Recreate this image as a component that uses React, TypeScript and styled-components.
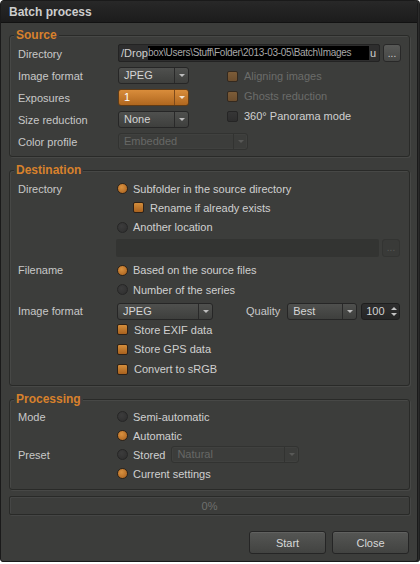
import React from 'react';
import styled, { createGlobalStyle, css } from 'styled-components';

const GlobalStyle = createGlobalStyle`
  html, body {
    margin: 0;
    padding: 0;
    background: #ffffff;
  }
  body {
    font-family: "Liberation Sans", Arial, sans-serif;
    font-size: 11px;
  }
`;

const Window = styled.div`
  width: 418px;
  height: 562px;
  box-sizing: border-box;
  background: #3c3d3b;
  border: 1px solid #1a1a1a;
  border-radius: 4px 4px 3px 3px;
  box-shadow: 1px 0 0 #2b2b2b, 2px 0 0 #202020;
  display: flex;
  flex-direction: column;
  overflow: hidden;
`;

const TitleBar = styled.div`
  height: 21px;
  flex: 0 0 21px;
  display: flex;
  align-items: center;
  padding-left: 8px;
  background: linear-gradient(#282828, #1c1c1c);
  border-bottom: 1px solid #121212;
`;

const Title = styled.span`
  font-weight: bold;
  font-size: 12px;
  color: #cdcdcd;
`;

const Body = styled.div`
  display: flex;
  flex-direction: column;
  padding: 0 7px 7px 8px;
`;

const Group = styled.fieldset<{ $top: number; $bottom: number }>`
  margin: ${({ $top }) => $top}px 0 0;
  padding: 0 8px ${({ $bottom }) => $bottom}px 8px;
  min-inline-size: 0;
  border: 1px solid #292a28;
  border-radius: 3px;
  box-shadow: inset 1px 1px 0 rgba(255, 255, 255, 0.06),
    1px 1px 0 rgba(255, 255, 255, 0.06);
`;

const Legend = styled.legend`
  font-weight: bold;
  font-size: 12px;
  line-height: 14px;
  color: #d8812c;
  padding: 0 2px;
  margin-left: -4px;
  background: #3c3d3b;
`;

const SourceGrid = styled.div`
  display: grid;
  grid-template-columns: 100px 109px 1fr;
  grid-auto-rows: 17px;
  row-gap: 5px;
  align-items: center;
  padding-top: 3px;
`;

const Label = styled.span`
  color: #c8c8c8;
  white-space: nowrap;
`;

const Wide = styled.div`
  grid-column: 2 / 4;
  display: flex;
  gap: 3px;
  height: 100%;
`;

const TextField = styled.div`
  flex: 0 0 262px;
  box-sizing: border-box;
  height: 18px;
  margin-top: -1px;
  background: #2e2e2e;
  border: 1px solid #232323;
  border-radius: 2px;
  overflow: hidden;
  display: flex;
  align-items: center;
  padding: 0 3px 0 2px;
  color: #d0d0d0;
  white-space: nowrap;
`;

const Masked = styled.span`
  flex: 1;
  min-width: 0;
  background: #000;
  color: #a8a8a8;
  font-size: 10px;
  letter-spacing: -0.3px;
  line-height: 14px;
  white-space: nowrap;
  margin-right: 1px;
`;

const DotsButton = styled.div<{ $disabled?: boolean }>`
  width: 18px;
  box-sizing: border-box;
  height: 18px;
  margin-top: -1px;
  border-radius: 3px;
  display: flex;
  align-items: center;
  justify-content: center;
  font-size: 10px;
  ${({ $disabled }) =>
    $disabled
      ? css`
          background: #393a38;
          border: 1px solid #333432;
          color: #5a5a58;
        `
      : css`
          background: linear-gradient(#585957, #464745);
          border: 1px solid #282828;
          color: #d0d0d0;
        `}
`;

const CheckList = styled.div`
  grid-column: 3;
  grid-row: 2 / 5;
  align-self: start;
  display: flex;
  flex-direction: column;
  gap: 2px;
`;

const CheckRow = styled.div<{ $disabled?: boolean; $indent?: number }>`
  display: flex;
  align-items: center;
  gap: 6px;
  height: 18px;
  margin-left: ${({ $indent }) => $indent || 0}px;
  color: ${({ $disabled }) => ($disabled ? '#6b6c6a' : '#d0d0d0')};
  white-space: nowrap;
`;

type BoxState = 'on' | 'off' | 'dim';

const Box = styled.span<{ $state: BoxState }>`
  width: 11px;
  height: 11px;
  box-sizing: border-box;
  border-radius: 2px;
  flex: 0 0 11px;
  ${({ $state }) =>
    $state === 'on'
      ? css`
          background: linear-gradient(#d38d3b, #a9621f);
          border: 1px solid #2c2118;
        `
      : $state === 'dim'
      ? css`
          background: linear-gradient(#7c5c38, #6c4e2e);
          border: 1px solid #33291f;
        `
      : css`
          background: linear-gradient(#363636, #2e2e2e);
          border: 1px solid #252525;
        `}
`;

type ComboKind = 'normal' | 'orange' | 'disabled';

const Combo = styled.div<{ $w: number; $kind?: ComboKind; $left?: number }>`
  display: flex;
  width: ${({ $w }) => $w}px;
  height: 17px;
  box-sizing: border-box;
  border-radius: 3px;
  margin-left: ${({ $left }) => $left || 0}px;
  flex: 0 0 auto;
  ${({ $kind }) =>
    $kind === 'orange'
      ? css`
          background: linear-gradient(#d98d3b, #b0671f);
          border: 1px solid #5f3b16;
          color: #ffffff;
        `
      : $kind === 'disabled'
      ? css`
          background: transparent;
          border: 1px solid #323331;
          box-shadow: inset 0 0 0 1px rgba(255, 255, 255, 0.025);
          color: #676866;
        `
      : css`
          background: linear-gradient(#4f504e, #3e3f3d);
          border: 1px solid #262626;
          color: #d6d6d6;
        `}
`;

const ComboText = styled.span`
  flex: 1;
  padding-left: 5px;
  line-height: 15px;
  white-space: nowrap;
`;

const ComboArrow = styled.span<{ $kind?: ComboKind }>`
  width: 13px;
  display: flex;
  align-items: center;
  justify-content: center;
  border-left: 1px solid
    ${({ $kind }) =>
      $kind === 'orange' ? '#7d4a1b' : $kind === 'disabled' ? '#323331' : '#292929'};
  &::after {
    content: '';
    border-left: 3px solid transparent;
    border-right: 3px solid transparent;
    border-top: 3px solid
      ${({ $kind }) =>
        $kind === 'orange' ? '#f2e2d0' : $kind === 'disabled' ? '#585957' : '#bdbdbd'};
  }
`;

const Row = styled.div<{ $h: number; $top?: number }>`
  display: grid;
  grid-template-columns: 99px 1fr;
  align-items: center;
  height: ${({ $h }) => $h}px;
  margin-top: ${({ $top }) => $top || 0}px;
`;

const Cell = styled.div`
  grid-column: 2;
  display: flex;
  align-items: center;
  gap: 3px;
`;

const RadioItem = styled.div`
  display: flex;
  align-items: center;
  gap: 5px;
  color: #d0d0d0;
  white-space: nowrap;
`;

const Radio = styled.span<{ $on?: boolean }>`
  width: 11px;
  height: 11px;
  box-sizing: border-box;
  border-radius: 50%;
  flex: 0 0 11px;
  ${({ $on }) =>
    $on
      ? css`
          background: radial-gradient(circle at 40% 35%, #d9913f, #a65f1d);
          border: 1px solid #2e2318;
        `
      : css`
          background: radial-gradient(circle at 40% 35%, #3c3c3c, #2e2e2e);
          border: 1px solid #262626;
        `}
`;

const DeadField = styled.div`
  width: 263px;
  height: 18px;
  margin-left: -1px;
  background: #333432;
  border-radius: 2px;
`;

const QualityLabel = styled(Label)`
  margin-left: 30px;
`;

const Spin = styled.div`
  display: flex;
  align-items: center;
  width: 39px;
  height: 17px;
  box-sizing: border-box;
  margin-left: 1px;
  background: linear-gradient(#2f2f2f, #262626);
  border: 1px solid #1e1e1e;
  border-radius: 3px;
  color: #d2d2d2;
  padding-left: 4px;
`;

const SpinValue = styled.span`
  flex: 1;
`;

const SpinArrows = styled.span`
  width: 11px;
  display: flex;
  flex-direction: column;
  align-items: center;
  gap: 3px;
  &::before,
  &::after {
    content: '';
    border-left: 3px solid transparent;
    border-right: 3px solid transparent;
  }
  &::before {
    border-bottom: 3px solid #c4c4c4;
  }
  &::after {
    border-top: 3px solid #c4c4c4;
  }
`;

const StoredLabel = styled.span`
  margin-right: 3px;
`;

const Progress = styled.div`
  margin-top: 6px;
  height: 19px;
  box-sizing: border-box;
  border: 1px solid #292a28;
  border-radius: 2px;
  box-shadow: inset 1px 1px 0 rgba(255, 255, 255, 0.05),
    1px 1px 0 rgba(255, 255, 255, 0.05);
  display: flex;
  align-items: center;
  justify-content: center;
  color: #6f706e;
`;

const ButtonBar = styled.div`
  margin-top: 16px;
  display: flex;
  justify-content: flex-end;
  gap: 6px;
  padding-right: 1px;
`;

const Button = styled.button`
  width: 77px;
  height: 23px;
  font-family: inherit;
  font-size: 11px;
  color: #d8d8d8;
  background: linear-gradient(#555654, #424341);
  border: 1px solid #252525;
  border-radius: 3px;
  box-shadow: inset 0 1px 0 rgba(255, 255, 255, 0.07);
  padding: 0;
`;

function Select({ w, value, kind, left }: { w: number; value: string; kind?: ComboKind; left?: number }) {
  return (
    <Combo $w={w} $kind={kind} $left={left}>
      <ComboText>{value}</ComboText>
      <ComboArrow $kind={kind} />
    </Combo>
  );
}

function Check({ label, state, disabled, indent }: { label: string; state: BoxState; disabled?: boolean; indent?: number }) {
  return (
    <CheckRow $disabled={disabled} $indent={indent}>
      <Box $state={state} />
      {label}
    </CheckRow>
  );
}

function RadioRow({ h, label, on, text, top, children }: {
  h: number;
  label?: string;
  on?: boolean;
  text: string;
  top?: number;
  children?: React.ReactNode;
}) {
  return (
    <Row $h={h} $top={top}>
      {label && <Label>{label}</Label>}
      <Cell>
        <RadioItem>
          <Radio $on={on} />
          {children ? <StoredLabel>{text}</StoredLabel> : text}
        </RadioItem>
        {children}
      </Cell>
    </Row>
  );
}

export default function App(): React.JSX.Element {
  return (
    <>
      <GlobalStyle />
      <Window>
        <TitleBar>
          <Title>Batch process</Title>
        </TitleBar>
        <Body>
          <Group $top={5} $bottom={6}>
            <Legend>Source</Legend>
            <SourceGrid>
              <Label>Directory</Label>
              <Wide>
                <TextField>
                  /Drop
                  <Masked>box\Users\Stuff\Folder\2013-03-05\Batch\Images</Masked>
                  u
                </TextField>
                <DotsButton>...</DotsButton>
              </Wide>

              <Label>Image format</Label>
              <Select w={71} value="JPEG" />
              <CheckList>
                <Check label="Aligning images" state="dim" disabled />
                <Check label="Ghosts reduction" state="dim" disabled />
                <Check label="360° Panorama mode" state="off" />
              </CheckList>

              <Label>Exposures</Label>
              <Select w={71} value="1" kind="orange" />

              <Label>Size reduction</Label>
              <Select w={71} value="None" />

              <Label>Color profile</Label>
              <Wide>
                <Select w={130} value="Embedded" kind="disabled" />
              </Wide>
            </SourceGrid>
          </Group>

          <Group $top={6} $bottom={6}>
            <Legend>Destination</Legend>
            <RadioRow h={19} top={2} label="Directory" on text="Subfolder in the source directory" />
            <Row $h={19}>
              <Cell>
                <Check label="Rename if already exists" state="on" indent={16} />
              </Cell>
            </Row>
            <RadioRow h={20} text="Another location" />
            <Row $h={18} $top={2}>
              <Cell>
                <DeadField />
                <DotsButton $disabled>...</DotsButton>
              </Cell>
            </Row>
            <RadioRow h={20} top={3} label="Filename" on text="Based on the source files" />
            <RadioRow h={19} text="Number of the series" />
            <Row $h={18} $top={3}>
              <Label>Image format</Label>
              <Cell>
                <Select w={96} value="JPEG" />
                <QualityLabel>Quality</QualityLabel>
                <Select w={70} value="Best" left={4} />
                <Spin>
                  <SpinValue>100</SpinValue>
                  <SpinArrows />
                </Spin>
              </Cell>
            </Row>
            <Row $h={19}>
              <Cell>
                <Check label="Store EXIF data" state="on" />
              </Cell>
            </Row>
            <Row $h={20}>
              <Cell>
                <Check label="Store GPS data" state="on" />
              </Cell>
            </Row>
            <Row $h={20}>
              <Cell>
                <Check label="Convert to sRGB" state="on" />
              </Cell>
            </Row>
          </Group>

          <Group $top={6} $bottom={6}>
            <Legend>Processing</Legend>
            <RadioRow h={19} top={1} label="Mode" text="Semi-automatic" />
            <RadioRow h={19} on text="Automatic" />
            <RadioRow h={19} label="Preset" text="Stored">
              <Select w={128} value="Natural" kind="disabled" />
            </RadioRow>
            <RadioRow h={19} on text="Current settings" />
          </Group>

          <Progress>0%</Progress>

          <ButtonBar>
            <Button>Start</Button>
            <Button>Close</Button>
          </ButtonBar>
        </Body>
      </Window>
    </>
  );
}
